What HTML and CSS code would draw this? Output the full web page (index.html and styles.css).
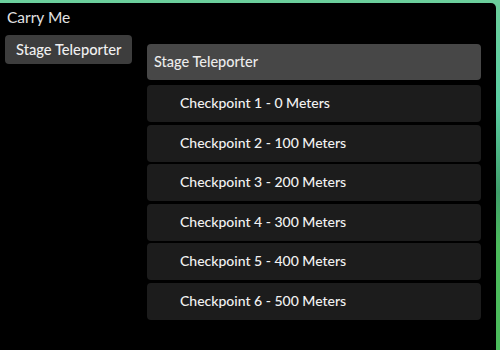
FILE: index.html
```html
<!DOCTYPE html>
<html lang="en">
<head>
  <meta charset="UTF-8" />
  <title>Carry Me</title>
  <link rel="stylesheet" href="styles.css">
</head>
<body>

  <!-- Ventana -->
  <div class="ventana">
    <div class="titulo">Carry Me</div>

    <div class="cuerpo">
      <!-- Pestañas -->
      <div class="pestanas">
        <div class="pestana">Stage Teleporter</div>
      </div>

      <!-- Contenido -->
      <div class="contenido">
        <div class="seccion">Stage Teleporter</div>
        <div class="boton">Checkpoint 1 - 0 Meters</div>
        <div class="boton">Checkpoint 2 - 100 Meters</div>
        <div class="boton">Checkpoint 3 - 200 Meters</div>
        <div class="boton">Checkpoint 4 - 300 Meters</div>
        <div class="boton">Checkpoint 5 - 400 Meters</div>
        <div class="boton">Checkpoint 6 - 500 Meters</div>
      </div>
    </div>
  </div>

</body>
</html>
```

FILE: styles.css
```css
body {
  margin: 0;
  height: 350px;
  overflow: hidden;
  background: linear-gradient(to bottom, #6ccf9c 0%, #5ccfa4 30%, #3f9e6a 55%, #4cbb5c 70%, #4cbb5c 100%);
  font-family: Lato, "Noto Sans", sans-serif;
}

.ventana {
  height: 347px;
  margin: 3px 4px 0 0;
  background: #000;
  border-radius: 0 5px 0 0;
}

.titulo {
  padding: 5px 0 0 7px;
  height: 23px;
  font-size: 15.5px;
  color: #e2e2e2;
}

.cuerpo {
  display: flex;
  padding-left: 5px;
  gap: 15px;
}

.pestanas {
  width: 127px;
  padding-top: 4px;
}

.pestana {
  height: 29px;
  line-height: 29px;
  padding-left: 11px;
  background: #3d3d3d;
  border-radius: 4px;
  font-size: 14.7px;
  font-weight: 500;
  color: #f0f0f0;
}

.contenido {
  width: 334px;
  padding-top: 13px;
  display: flex;
  flex-direction: column;
  gap: 2.6px;
}

.seccion {
  height: 36px;
  line-height: 36px;
  padding-left: 7px;
  margin-bottom: 2.4px;
  background: #474747;
  border-radius: 4px;
  font-size: 14.5px;
  font-weight: 500;
  color: #ececec;
}

.boton {
  height: 37px;
  line-height: 36px;
  padding-left: 33px;
  background: #1c1c1c;
  border-radius: 4px;
  font-size: 14px;
  font-weight: 500;
  color: #f2f2f2;
}
```
